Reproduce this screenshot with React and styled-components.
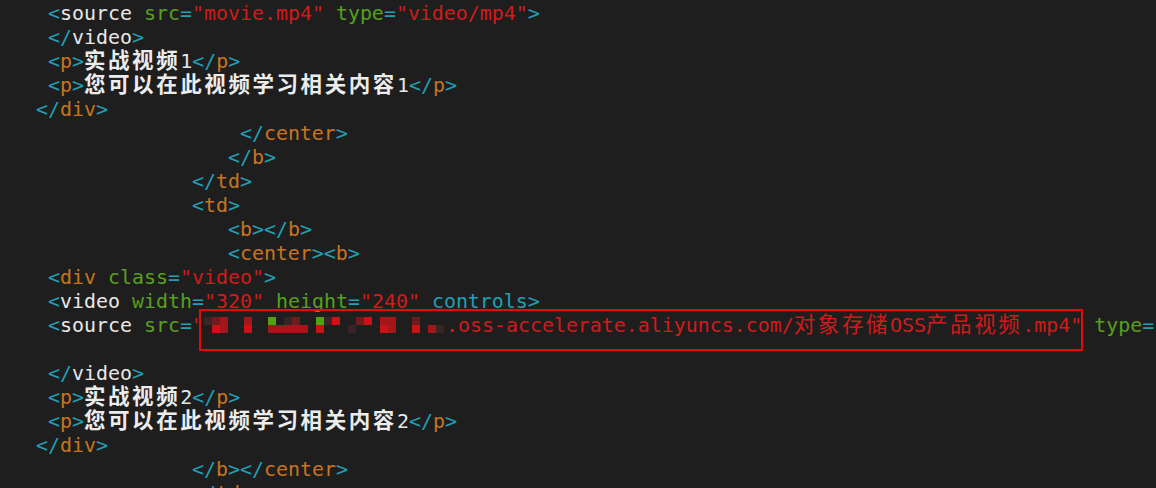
import styled, { createGlobalStyle } from "styled-components";

const Global = createGlobalStyle`
  html, body {
    margin: 0;
    padding: 0;
    background: #1e1e1e;
  }
`;

const Editor = styled.div`
  width: 1156px;
  height: 488px;
  overflow: hidden;
  background: #1e1e1e;
  padding-top: 2px;
  box-sizing: border-box;
  font-family: "DejaVu Sans Mono", "Noto Sans CJK SC", monospace;
  font-size: 19.93px;
  color: #e6e6e6;
`;

const Line = styled.div`
  position: relative;
  height: 24px;
  line-height: 24px;
  white-space: pre;
`;

const P = styled.span`
  color: #1fa0b3;
`;
const Tag = styled.span`
  color: #c8741f;
`;
const Elem = styled.span`
  color: #e8e8e8;
`;
const Attr = styled.span`
  color: #55a01c;
`;
const Str = styled.span`
  color: #d21a1a;
`;
const Kw = styled.span`
  color: #1fa0b3;
`;
const Cjk = styled.span`
  font-family: "Noto Sans CJK SC", sans-serif;
  font-size: 21.5px;
  font-weight: ${(p) => (p.$bold ? 700 : 400)};
  letter-spacing: 2.57px;
  line-height: 14px;
  color: ${(p) => p.$color || "#ececec"};
`;

const Highlight = styled.div`
  position: absolute;
  left: 199px;
  top: -5px;
  width: 884px;
  height: 42px;
  box-sizing: border-box;
  border: 2px solid #e50a0a;
  pointer-events: none;
`;

const Mosaic = styled.span`
  display: inline-grid;
  grid-template-columns: repeat(30, 8px);
  grid-template-rows: repeat(2, 8px);
  width: 240px;
  height: 24px;
  padding-top: 3px;
  box-sizing: border-box;
  vertical-align: top;
  margin-right: 2px;
`;

const Cell = styled.span`
  background: ${(p) => p.$c};
`;

const palette = {
  ".": "transparent",
  r: "#cc1216",
  m: "#a3161a",
  d: "#6e1d1e",
  f: "#3a2525",
  g: "#55a00f",
};

const mosaicRows = [
  "fdm..m..g.fd..gfr..dr.mm..d...",
  ".rm..r..mmmmm.r...f...rm..r.mf",
];

const MosaicBlock = () => (
  <Mosaic>
    {mosaicRows.flatMap((row, y) =>
      row.split("").map((ch, x) => <Cell key={`${y}-${x}`} $c={palette[ch]} />)
    )}
  </Mosaic>
);

const Open = ({ name, elem, children }) => (
  <>
    <P>&lt;</P>
    {elem ? <Elem>{name}</Elem> : <Tag>{name}</Tag>}
    {children}
    <P>&gt;</P>
  </>
);

const Close = ({ name }) => (
  <>
    <P>&lt;/</P>
    <Tag>{name}</Tag>
    <P>&gt;</P>
  </>
);

const CloseElem = ({ name }) => (
  <>
    <P>&lt;/</P>
    <Elem>{name}</Elem>
    <P>&gt;</P>
  </>
);

const AttrPair = ({ name, value }) => (
  <>
    {" "}
    <Attr>{name}</Attr>
    <P>=</P>
    <Str>"{value}"</Str>
  </>
);

const Para = ({ title, n }) => (
  <Line>
    {"    "}
    <Open name="p" />
    <Cjk $bold>{title}</Cjk>
    {n}
    <Close name="p" />
  </Line>
);

export default function App() {
  return (
    <>
      <Global />
      <Editor>
        <Line>
          {"    "}
          <Open name="source" elem>
            <AttrPair name="src" value="movie.mp4" />
            <AttrPair name="type" value="video/mp4" />
          </Open>
        </Line>
        <Line>
          {"    "}
          <CloseElem name="video" />
        </Line>
        <Para title="实战视频" n="1" />
        <Para title="您可以在此视频学习相关内容" n="1" />
        <Line>
          {"   "}
          <Close name="div" />
        </Line>
        <Line>
          {"                    "}
          <Close name="center" />
        </Line>
        <Line>
          {"                   "}
          <Close name="b" />
        </Line>
        <Line>
          {"                "}
          <Close name="td" />
        </Line>
        <Line>
          {"                "}
          <Open name="td" />
        </Line>
        <Line>
          {"                   "}
          <Open name="b" />
          <Close name="b" />
        </Line>
        <Line>
          {"                   "}
          <Open name="center" />
          <Open name="b" />
        </Line>
        <Line>
          {"    "}
          <Open name="div">
            <AttrPair name="class" value="video" />
          </Open>
        </Line>
        <Line>
          {"    "}
          <Open name="video" elem>
            <AttrPair name="width" value="320" />
            <AttrPair name="height" value="240" />
            {" "}
            <Kw>controls</Kw>
          </Open>
        </Line>
        <Line>
          {"    "}
          <P>&lt;</P>
          <Elem>source</Elem> <Attr>src</Attr>
          <P>=</P>
          <Str>"</Str>
          <MosaicBlock />
          <Str>.oss-accelerate.aliyuncs.com/</Str>
          <Cjk $color="#d21a1a">对象存储</Cjk>
          <Str>OSS</Str>
          <Cjk $color="#d21a1a">产品视频</Cjk>
          <Str>.mp4"</Str> <Attr>type</Attr>
          <P>=</P>
          <Str>"video/mp4"</Str>
          <P>&gt;</P>
          <Highlight />
        </Line>
        <Line />
        <Line>
          {"    "}
          <CloseElem name="video" />
        </Line>
        <Para title="实战视频" n="2" />
        <Para title="您可以在此视频学习相关内容" n="2" />
        <Line>
          {"   "}
          <Close name="div" />
        </Line>
        <Line>
          {"                "}
          <Close name="b" />
          <Close name="center" />
        </Line>
        <Line>
          {"                "}
          <Close name="td" />
        </Line>
      </Editor>
    </>
  );
}
